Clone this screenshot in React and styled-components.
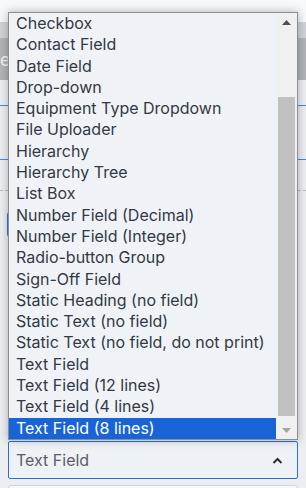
import React from 'react';
import styled, { createGlobalStyle } from 'styled-components';

const GlobalStyle = createGlobalStyle`
	html, body {
		margin: 0;
		padding: 0;
		background: #eceef1;
	}
	body {
		font-family: Inter, "Noto Sans", sans-serif;
	}
`;

const options = [
	'Checkbox',
	'Contact Field',
	'Date Field',
	'Drop-down',
	'Equipment Type Dropdown',
	'File Uploader',
	'Hierarchy',
	'Hierarchy Tree',
	'List Box',
	'Number Field (Decimal)',
	'Number Field (Integer)',
	'Radio-button Group',
	'Sign-Off Field',
	'Static Heading (no field)',
	'Static Text (no field)',
	'Static Text (no field, do not print)',
	'Text Field',
	'Text Field (12 lines)',
	'Text Field (4 lines)',
	'Text Field (8 lines)',
];

const Page = styled.div`
	position: relative;
	width: 306px;
	height: 488px;
	overflow: hidden;
	display: flex;
	flex-direction: column;
`;

const TopStrip = styled.div`
	height: 22px;
	background: #f7f8f9;
	flex: none;
`;

const SubBar = styled.div`
	height: 16px;
	background: #cfd3d8;
	flex: none;
`;

const Header = styled.div`
	height: 42px;
	background: #b1b5ba;
	flex: none;
	display: flex;
	align-items: center;
	color: #eef0f2;
	font-size: 18px;
	white-space: nowrap;
`;

const Body = styled.div`
	flex: 1;
	display: flex;
	flex-direction: column;
	padding: 0 8px;
`;

const Rule = styled.div`
	flex: none;
	margin: ${p => p.$top}px -8px 0;
	border-top: 1px ${p => (p.$dashed ? 'dashed' : 'solid')} ${p => p.$color};
`;

const Input = styled.div`
	flex: none;
	margin-top: 19px;
	margin-left: -1px;
	height: 27px;
	border: 1px solid #3b78d8;
	border-radius: 5px;
	background: #f4f6f8;
`;

const Select = styled.div`
	flex: none;
	margin-top: 202px;
	height: 38px;
	box-sizing: border-box;
	border: 1px solid #2b6fd8;
	border-radius: 2px;
	background: #eef2f7;
	display: flex;
	align-items: center;
	justify-content: space-between;
	padding: 0 14px 0 7px;
	font-size: 16px;
	color: #5b6068;
`;

const NextBox = styled.div`
	flex: none;
	margin-top: 6px;
	height: 30px;
	border: 1px solid #d3d6da;
	border-radius: 3px;
	background: #f6f7f9;
`;

const Popup = styled.div`
	position: absolute;
	left: 8px;
	top: 12px;
	width: 290px;
	height: 428px;
	box-sizing: border-box;
	border: 1px solid #8e8e8e;
	background: #eff3f8;
	box-shadow: 0 0 9px rgba(0, 0, 0, 0.28);
	display: flex;
`;

const List = styled.ul`
	flex: 1;
	margin: 0;
	padding: 0;
	list-style: none;
`;

const Item = styled.li`
	height: 21.3px;
	line-height: 21.3px;
	padding-left: 7px;
	font-size: 16px;
	white-space: nowrap;
	color: ${p => (p.$selected ? '#ffffff' : '#333944')};
	background: ${p => (p.$selected ? '#1864d7' : 'transparent')};
`;

const Scrollbar = styled.div`
	width: 21px;
	flex: none;
	background: #f0f0f0;
	display: flex;
	flex-direction: column;
	padding: 0 2px 0 2px;
	box-sizing: border-box;
`;

const ArrowButton = styled.div`
	height: 18px;
	flex: none;
	display: flex;
	align-items: center;
	justify-content: center;
`;

const Track = styled.div`
	flex: 1;
	display: flex;
	flex-direction: column;
`;

const Thumb = styled.div`
	margin-top: 66px;
	height: 319px;
	background: #c1c1c1;
`;

const Triangle = ({ up, color }) => (
	<svg width="9" height="5" viewBox="0 0 9 5">
		<polygon points={up ? '0,5 9,5 4.5,0' : '0,0 9,0 4.5,5'} fill={color} />
	</svg>
);

const Chevron = () => (
	<svg width="11" height="7" viewBox="0 0 11 7">
		<polyline points="1.5,6 5.5,2 9.5,6" fill="none" stroke="#2c2f33" strokeWidth="2" />
	</svg>
);

export default function App() {
	const selected = 'Text Field (8 lines)';
	return (
		<>
			<GlobalStyle />
			<Page>
				<TopStrip />
				<SubBar />
				<Header>e</Header>
				<Body>
					<Rule $top={25} $color="#4a86e0" />
					<Rule $top={53} $color="#4a86e0" />
					<Rule $top={30} $color="#b9bdc2" $dashed />
					<Input />
					<Select>
						<span>Text Field</span>
						<Chevron />
					</Select>
					<NextBox />
				</Body>
				<Popup>
					<List>
						{options.map(opt => (
							<Item key={opt} $selected={opt === selected}>
								{opt}
							</Item>
						))}
					</List>
					<Scrollbar>
						<ArrowButton>
							<Triangle up color="#505050" />
						</ArrowButton>
						<Track>
							<Thumb />
						</Track>
						<ArrowButton>
							<Triangle color="#a3a3a3" />
						</ArrowButton>
					</Scrollbar>
				</Popup>
			</Page>
		</>
	);
}
